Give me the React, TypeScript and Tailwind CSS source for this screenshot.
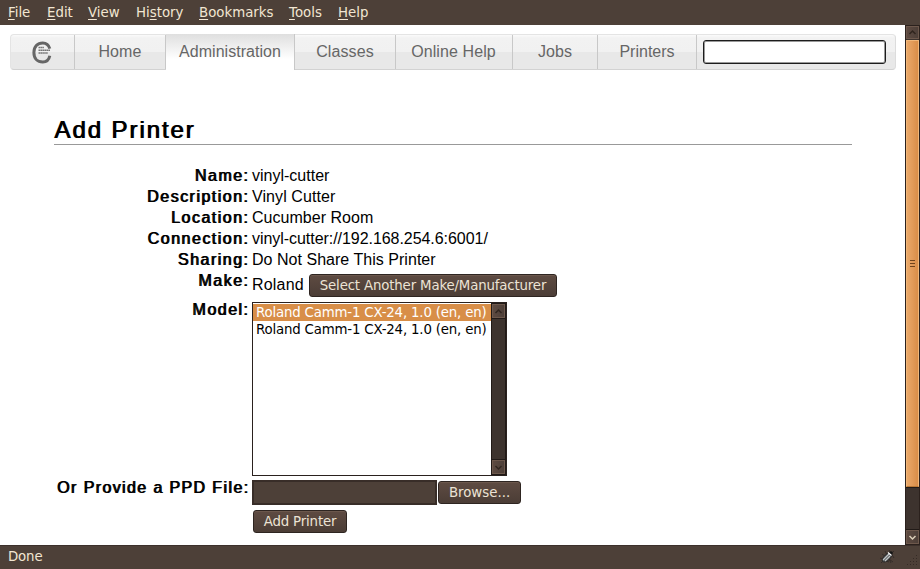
import React from "react";

const dejavu = "font-['DejaVu_Sans',sans-serif] text-[13.33px]";
const button =
  "flex items-center justify-center rounded-[3px] border border-[#2e2521] bg-gradient-to-b from-[#5e4b42] to-[#4b3d36] text-[#ece3d5] shadow-[inset_0_1px_0_#6b574c] whitespace-nowrap " + dejavu;

const menus = [
  { key: "F", rest: "ile", pre: "", w: "w-[39px]" },
  { key: "E", rest: "dit", pre: "", w: "w-[41px]" },
  { key: "V", rest: "iew", pre: "", w: "w-[48px]" },
  { key: "s", rest: "tory", pre: "Hi", w: "w-[63px]" },
  { key: "B", rest: "ookmarks", pre: "", w: "w-[90px]" },
  { key: "T", rest: "ools", pre: "", w: "w-[49px]" },
  { key: "H", rest: "elp", pre: "", w: "w-[40px]" },
];

const tabs = [
  { name: "Home", w: "w-[91px]", spacing: "tracking-[0.1px]" },
  { name: "Administration", w: "w-[129px]", active: true, spacing: "tracking-[0.03px]" },
  { name: "Classes", w: "w-[101px]", spacing: "tracking-[0.1px]" },
  { name: "Online Help", w: "w-[117px]", spacing: "tracking-[0.1px] pr-px" },
  { name: "Jobs", w: "w-[85px]", spacing: "tracking-normal" },
  { name: "Printers", w: "w-[99px]", spacing: "tracking-normal" },
];

const details = [
  ["Name:", "vinyl-cutter", "tracking-normal"],
  ["Description:", "Vinyl Cutter", "tracking-[0.08px]"],
  ["Location:", "Cucumber Room", "tracking-[0.03px]"],
  ["Connection:", "vinyl-cutter://192.168.254.6:6001/", "tracking-[-0.05px]"],
  ["Sharing:", "Do Not Share This Printer", "tracking-[0.03px]"],
];

function Label({ children, spacing = "tracking-[1.48px]" }: { children: React.ReactNode; spacing?: string }) {
  return (
    <div className={"mr-[3px] w-[249px] shrink-0 text-right leading-[21px] whitespace-nowrap [text-shadow:1px_0_0_#000] " + spacing}>
      {children}
    </div>
  );
}

function Arrow({ down, color }: { down?: boolean; color: string }) {
  return (
    <svg width="9" height="7" viewBox="0 0 9 7" fill="none" stroke={color} strokeWidth="1.5" className="shrink-0">
      <path d={down ? "M1.5 2 L4.5 5 L7.5 2" : "M1.5 5 L4.5 2 L7.5 5"} />
    </svg>
  );
}

const stepper =
  "flex shrink-0 items-center justify-center border border-[#6d584c] bg-gradient-to-r from-[#5d4a41] to-[#4d3f38]";

export default function App() {
  return (
    <div className="flex h-[569px] w-[920px] flex-col overflow-hidden bg-white font-['Liberation_Sans',Arial,sans-serif] text-[16px] text-black">
      <nav className={"flex h-[25px] shrink-0 items-center bg-[#4d4038] pl-2 text-[#f2e6d2] " + dejavu}>
        {menus.map((m) => (
          <span key={m.pre + m.key} className={m.w + " whitespace-nowrap"}>
            {m.pre}
            <span className="underline decoration-1 underline-offset-2">{m.key}</span>
            {m.rest}
          </span>
        ))}
      </nav>

      <div className="flex h-[520px] shrink-0">
        <main className="w-[905px]">
          <div className="mt-[9px] ml-[10px] flex h-9 w-[886px] rounded-[4px] border-t border-r border-b border-l border-t-[#e4e4e4] border-r-[#dcdcdc] border-b-[#d2d2d2] border-l-[#e4e4e4] bg-[linear-gradient(#fafafa_0px,#f2f2f2_3px,#f1f1f1_17px,#e8e8e8_17px,#e8e8e8_100%)]">
            <div className="flex w-16 items-center justify-center border-r border-[#c8c8c8] pr-[1px]">
              <svg width="20" height="23" viewBox="0 0 20 23">
                <path d="M17.8 7.6 C16.6 3.6 14.2 1.9 10.8 1.9 C5.4 1.9 1.9 5.5 1.9 11.5 C1.9 17.5 5.4 21.1 10.8 21.1 C14.6 21.1 16.9 19 17.8 14.8" fill="none" stroke="#666" strokeWidth="3" />
                <g stroke="#777" strokeWidth="1.5">
                  <path d="M6.5 6.5 H12" strokeDasharray="1.6 .3" />
                  <path d="M6.5 9.2 H18" strokeDasharray="1.8 .3" />
                  <path d="M6.5 12 H16" strokeDasharray="1.6 .3" />
                </g>
              </svg>
            </div>
            {tabs.map((t) => (
              <div
                key={t.name}
                className={
                  t.w + " " + t.spacing +
                  " flex items-center justify-center border-r border-[#c8c8c8] pb-[1px] whitespace-nowrap text-[#666] " +
                  (t.active ? "-my-px bg-gradient-to-b from-[#dfdfdf] to-white to-70%" : "")
                }
              >
                {t.name}
              </div>
            ))}
            <input aria-label="Search" className="mt-[5px] ml-[6px] h-6 w-[183px] rounded-[3px] border border-[#1c1c1c] bg-white shadow-[inset_0_0_0_1px_#999] outline-none" />
          </div>

          <h1 className="mt-[45px] ml-[54px] h-[30px] w-[798px] border-b border-[#999] text-[24px] leading-[29px] tracking-[1.92px] [text-shadow:1px_0_0_#000]">
            Add Printer
          </h1>

          <div className="mt-[20px] flex flex-col">
            {details.map(([label, value, spacing]) => (
              <div key={label} className="flex h-[21px]">
                <Label>{label}</Label>
                <span className={"leading-[21px] " + spacing}>{value}</span>
              </div>
            ))}
            <div className="flex h-[29px]">
              <Label>Make:</Label>
              <span className="mt-[5px] w-[57px] leading-[20px] tracking-[0.2px]">Roland</span>
              <button className={button + " mt-[4px] h-[23px] w-[248px] tracking-[-0.16px]"}>Select Another Make/Manufacturer</button>
            </div>
            <div className="flex h-[178px]">
              <Label>Model:</Label>
              <div className={"mt-[3px] flex h-[174px] w-[255px] border border-[#2a211e] bg-white tracking-[-0.18px] " + dejavu}>
                <div className="w-[238px] shrink-0 pt-px whitespace-nowrap">
                  <div className="h-[17px] bg-[#d88e48] pl-[3px] leading-[17px] text-white">Roland Camm-1 CX-24, 1.0 (en, en)</div>
                  <div className="h-[17px] pl-[3px] leading-[17px]">Roland Camm-1 CX-24, 1.0 (en, en)</div>
                </div>
                <div className="flex w-[15px] shrink-0 flex-col justify-between border border-[#211a17] bg-[#3d332e]">
                  <div className={stepper + " h-[14px] shadow-[0_1px_0_#211a17]"}><Arrow color="#30251f" /></div>
                  <div className={stepper + " h-[14px] shadow-[0_-1px_0_#211a17]"}><Arrow down color="#30251f" /></div>
                </div>
              </div>
            </div>
            <div className="flex h-[31px]">
              <Label spacing="tracking-[1.38px]">Or Provide a PPD File:</Label>
              <div className="mt-[3px] h-[25px] w-[185px] border-2 border-[#382d28] bg-[#4d4038]" />
              <button className={button + " mt-[4px] ml-px h-[23px] w-[83px]"}>Browse...</button>
            </div>
            <button className={button + " mt-[2px] ml-[253px] h-[23px] w-[94px] tracking-[-0.16px]"}>Add Printer</button>
          </div>
        </main>

        <div className="flex w-[15px] flex-col border border-[#2b211d] bg-[#3d332e]">
          <div className={stepper + " h-[13px]"}><Arrow color="#30251f" /></div>
          <div className="mt-px flex h-[447px] shrink-0 flex-col items-center justify-center gap-[2px] border border-[#f1b77a] border-b-[#b97735] bg-gradient-to-r from-[#eaa869] to-[#d98d48]">
            <div className="h-px w-[5px] bg-[#70431d]" />
            <div className="h-px w-[5px] bg-[#70431d]" />
            <div className="h-px w-[5px] bg-[#70431d]" />
          </div>
          <div className="flex-1 border-y border-[#211a17]" />
          <div className={stepper + " h-[14px]"}><Arrow down color="#dccfb9" /></div>
        </div>
      </div>

      <footer className={"flex h-6 shrink-0 items-center justify-between border-t border-[#3c302b] bg-[#4d4038] pl-2 text-[#f2e6d2] " + dejavu}>
        <span className="pb-[2px] tracking-[-0.15px]">Done</span>
        <div className="flex items-end">
          <svg width="18" height="16" viewBox="0 0 18 16" className="mr-[10px] mb-[2px]">
            <path d="M3 5 L14 13 M6 2 L12 14 M1 9 L10 13 M10 1 L15 9 M2 14 L15 2" stroke="#2a2422" strokeWidth="0.7" />
            <ellipse cx="8" cy="8.5" rx="5.8" ry="2.9" transform="rotate(-43 8 8.5)" fill="#56585a" stroke="#242424" strokeWidth=".8" />
            <path d="M4 11 L10 5 M6 12 L11 7" stroke="#bfc4c6" strokeWidth="1.2" />
            <circle cx="12" cy="4" r="1.8" fill="#151515" />
            <path d="M9 3.5 L12.5 6.5" stroke="#fff" strokeWidth="1.2" />
          </svg>
          <svg width="13" height="13" viewBox="0 0 13 13" fill="#352b26">
            <path d="M9 1h1v1h-1zM6 4h1v1h-1zM9 4h1v1h-1zM3 7h1v1h-1zM6 7h1v1h-1zM9 7h1v1h-1zM0 10h1v1h-1zM3 10h1v1h-1zM6 10h1v1h-1zM9 10h1v1h-1z" />
          </svg>
        </div>
      </footer>
    </div>
  );
}
